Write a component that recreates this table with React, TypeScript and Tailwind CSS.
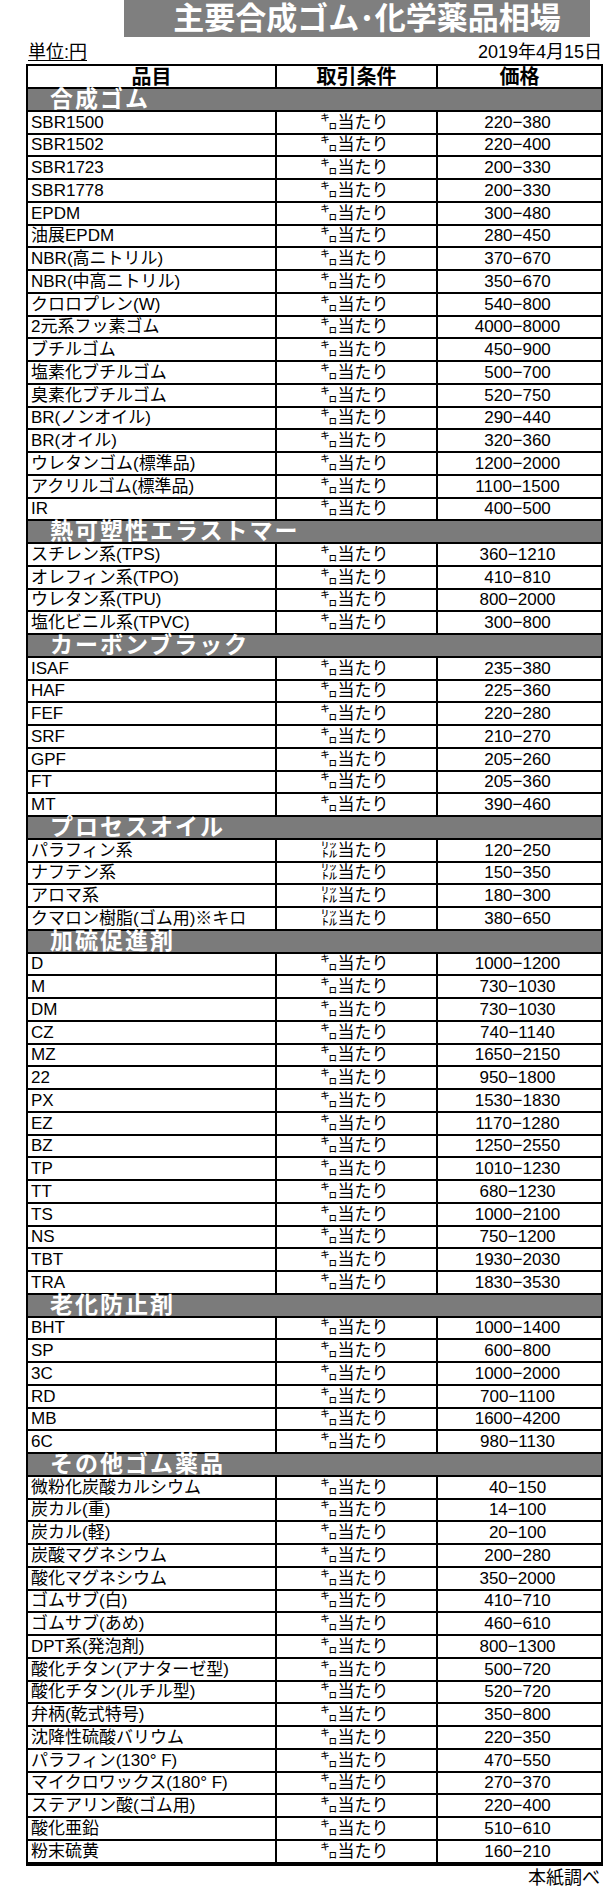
import React from 'react';

type Row = [string, string];
type Section = { title: string; unit?: string; rows: Row[] };

const KG = '㌔当たり';
const LT = '㍑当たり';

const sections: Section[] = [
  {
    title: '合成ゴム',
    rows: [
      ['SBR1500', '220−380'],
      ['SBR1502', '220−400'],
      ['SBR1723', '200−330'],
      ['SBR1778', '200−330'],
      ['EPDM', '300−480'],
      ['油展EPDM', '280−450'],
      ['NBR(高ニトリル)', '370−670'],
      ['NBR(中高ニトリル)', '350−670'],
      ['クロロプレン(W)', '540−800'],
      ['2元系フッ素ゴム', '4000−8000'],
      ['ブチルゴム', '450−900'],
      ['塩素化ブチルゴム', '500−700'],
      ['臭素化ブチルゴム', '520−750'],
      ['BR(ノンオイル)', '290−440'],
      ['BR(オイル)', '320−360'],
      ['ウレタンゴム(標準品)', '1200−2000'],
      ['アクリルゴム(標準品)', '1100−1500'],
      ['IR', '400−500'],
    ],
  },
  {
    title: '熱可塑性エラストマー',
    rows: [
      ['スチレン系(TPS)', '360−1210'],
      ['オレフィン系(TPO)', '410−810'],
      ['ウレタン系(TPU)', '800−2000'],
      ['塩化ビニル系(TPVC)', '300−800'],
    ],
  },
  {
    title: 'カーボンブラック',
    rows: [
      ['ISAF', '235−380'],
      ['HAF', '225−360'],
      ['FEF', '220−280'],
      ['SRF', '210−270'],
      ['GPF', '205−260'],
      ['FT', '205−360'],
      ['MT', '390−460'],
    ],
  },
  {
    title: 'プロセスオイル',
    unit: LT,
    rows: [
      ['パラフィン系', '120−250'],
      ['ナフテン系', '150−350'],
      ['アロマ系', '180−300'],
      ['クマロン樹脂(ゴム用)※キロ', '380−650'],
    ],
  },
  {
    title: '加硫促進剤',
    rows: [
      ['D', '1000−1200'],
      ['M', '730−1030'],
      ['DM', '730−1030'],
      ['CZ', '740−1140'],
      ['MZ', '1650−2150'],
      ['22', '950−1800'],
      ['PX', '1530−1830'],
      ['EZ', '1170−1280'],
      ['BZ', '1250−2550'],
      ['TP', '1010−1230'],
      ['TT', '680−1230'],
      ['TS', '1000−2100'],
      ['NS', '750−1200'],
      ['TBT', '1930−2030'],
      ['TRA', '1830−3530'],
    ],
  },
  {
    title: '老化防止剤',
    rows: [
      ['BHT', '1000−1400'],
      ['SP', '600−800'],
      ['3C', '1000−2000'],
      ['RD', '700−1100'],
      ['MB', '1600−4200'],
      ['6C', '980−1130'],
    ],
  },
  {
    title: 'その他ゴム薬品',
    rows: [
      ['微粉化炭酸カルシウム', '40−150'],
      ['炭カル(重)', '14−100'],
      ['炭カル(軽)', '20−100'],
      ['炭酸マグネシウム', '200−280'],
      ['酸化マグネシウム', '350−2000'],
      ['ゴムサブ(白)', '410−710'],
      ['ゴムサブ(あめ)', '460−610'],
      ['DPT系(発泡剤)', '800−1300'],
      ['酸化チタン(アナターゼ型)', '500−720'],
      ['酸化チタン(ルチル型)', '520−720'],
      ['弁柄(乾式特号)', '350−800'],
      ['沈降性硫酸バリウム', '220−350'],
      ['パラフィン(130° F)', '470−550'],
      ['マイクロワックス(180° F)', '270−370'],
      ['ステアリン酸(ゴム用)', '220−400'],
      ['酸化亜鉛', '510−610'],
      ['粉末硫黄', '160−210'],
    ],
  },
];

const DataRow = ({ name, unit, price }: { name: string; unit: string; price: string }) => (
  <div className="grid h-[22.75px] grid-cols-[249px_161px_1fr] border-b-2 border-black text-[17px] leading-none">
    <div className="flex items-center whitespace-nowrap border-r-2 border-black pl-[3px]">{name}</div>
    <div className="flex items-center justify-center border-r-2 border-black pr-[4px]">{unit}</div>
    <div className="flex items-center justify-center pr-[4px]">{price}</div>
  </div>
);

export default function App() {
  return (
    <div className="w-[608px] bg-white pb-[6px] font-[Liberation_Sans,Noto_Sans_CJK_JP,sans-serif] text-black">
      {/* title */}
      <div className="ml-[124px] flex h-[37px] w-[466px] items-center justify-center bg-[#7f7f7f] pl-[20px] text-[31px] font-bold leading-none text-white">
        主要合成ゴム･化学薬品相場
      </div>

      <div className="flex h-[27px] items-end justify-between pb-[3px] pl-[28px] pr-[6px] text-[18px] leading-none">
        <span className="underline underline-offset-2">単位:円</span>
        <span>2019年4月15日</span>
      </div>

      {/* table */}
      <div className="ml-[26px] w-[577px] border-2 border-black">
        <div className="grid h-[23px] grid-cols-[249px_161px_1fr] border-b-2 border-black text-[20px] font-bold leading-none">
          <div className="flex items-center justify-center border-r-2 border-black">品目</div>
          <div className="flex items-center justify-center border-r-2 border-black">取引条件</div>
          <div className="flex items-center justify-center">価格</div>
        </div>

        {sections.map((s) => (
          <div key={s.title}>
            <div className="flex h-[22.75px] items-center border-b-2 border-black bg-[#7b7b7b] pl-[22px] text-[23px] font-bold leading-none tracking-[2px] text-white">
              {s.title}
            </div>
            {s.rows.map(([name, price], i) => (
              <DataRow key={name + i} name={name} unit={s.unit ?? KG} price={price} />
            ))}
          </div>
        ))}
      </div>

      <div className="flex justify-end pr-[8px] pt-[3px] text-[18px] leading-none">本紙調べ</div>
    </div>
  );
}
